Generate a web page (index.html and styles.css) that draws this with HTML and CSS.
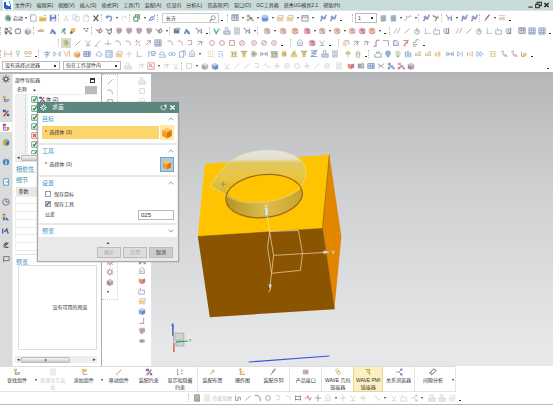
FILE: index.html
```html
<!DOCTYPE html>
<html lang="zh-CN">
<head>
<meta charset="utf-8">
<title>NX</title>
<link rel="stylesheet" href="styles.css">
</head>
<body>
<header>
  <nav class="menubar">
    <span class="logo" data-icon="app"></span>
    <a href="#">文件(F)</a><a href="#">编辑(E)</a><a href="#">视图(V)</a><a href="#">插入(S)</a><a href="#">格式(R)</a><a href="#">工具(T)</a><a href="#">装配(A)</a><a href="#">信息(I)</a><a href="#">分析(L)</a><a href="#">首选项(P)</a><a href="#">窗口(O)</a><a href="#">GC工具箱</a><a href="#">燕秀UG模具2.1</a><a href="#">帮助(H)</a>
    <span class="window-buttons"><button aria-label="最小化" data-icon="min"></button><button aria-label="还原" data-icon="restore"></button><button aria-label="关闭" data-icon="close"></button></span>
  </nav>
  <div class="bar tall" data-tools="g3 start"><span class="bar-label">启动</span></div>
  <div class="bar" data-tools="| parts asm cubeg | swoosh g2 figb figg figy g3 dots | bird bird2 pad pad pad pad bird v | blk figb g2 wire . | check stamp sheet wire v | g2 feat v g1 feat g2 feato g2 featr v feat v feat v feat featr feato v . g2 | lines line clock axis port dial g2 lines line clock axis port dial g3 tbl grid grid ."></div>
  <div class="bar low" data-tools="g58 | leaf g2 line snap line2 plus2 arc arc snapr arrowr grid g2 arc arc hook arrow2 g2 circ circ sq circs g2 circd circs circd . g6 | g2 dome g2 featr snap . g6 | folderp arrow2 arrow2 prof corner shape prof2 steps ."></div>
  <div class="bar low" data-tools="| dimh pin dimo . | g1 char mir miro boxy tblb g2 cloud list folder cross axis g3 scan cloudb chain clip dome v g4 dotg dotm g3 stack funnel globe dimb drum bell bottle funnel zig g1 stamp sheet g3 orb tower . | g2 hand bulb bulb2 bars mid mid midy g2 dimb next prevo playo g3 ladder g1 nums nums numy ."></div>
  <div class="bar tall last">
    <select aria-label="类型过滤器"><option>没有选择过滤器</option></select>
    <select id="scope" aria-label="选择范围"><option>仅在工作部件内</option></select>
    <div class="tools" data-tools="g2 stamp- g3 arrow2- redbox v arrow2- snap- | sq- v g1 cubeg cubeb g2 snap- line- line- hook- wave- plus- circd- circ- plus- line- circs- g2 sheet- g2 bookr bookb tblb wires netb netp boxp"></div>
    <span class="dot end"></span>
  </div>
</header>
<main>
  <aside class="rail" data-tools="gear treeo treer treep rainbow info page clk pal cad pen flag"></aside>
  <section class="navigator">
    <h2>部件导航器<i></i></h2>
    <div class="col-head">名称 <b>▲</b></div>
    <div class="tree">
      <ul>
        <li><span data-icon="chk"></span><span data-icon="treer"></span>体 (2)</li>
        <li><span data-icon="chk"></span></li>
        <li><span data-icon="chk"></span></li>
        <li><span data-icon="chk"></span></li>
        <li><span data-icon="chkr"></span></li>
        <li><span data-icon="chk"></span></li>
        <li><span data-icon="chk"></span></li>
      </ul>
    </div>
    <div class="scroll"><i>◂</i><b></b><i>▸</i></div>
    <h3>相依性</h3>
    <h3>细节</h3>
    <table><thead><tr><th>参数</th><th></th></tr></thead><tbody><tr><td></td><td></td></tr><tr><td></td><td></td></tr><tr><td></td><td></td></tr><tr><td></td><td></td></tr><tr><td></td><td></td></tr><tr><td></td><td></td></tr><tr><td></td><td></td></tr></tbody></table>
    <h3 class="preview-title">预览</h3>
    <div class="preview">没有可用的预览</div>
    <div class="scroll"><i>◂</i><b>⦀</b><i>▸</i></div>
  </section>
  <section class="docks">
    <div class="dock left" data-tools="line arc sq circ arc plus hook snap zig wave- circ plus arc line sheet circd snapr prof gearr gearr boxp v"></div>
    <div class="dock right" data-tools="stamp- sq- dome- cubeb feat boxp netb feat stamp cubeb feat boxp netb feat stamp cubeb feat featr netp dome bookr port folder cubeb hook2 pad eye"></div>
  </section>
  <section class="canvas">
    <svg viewBox="151 73 402 293" preserveAspectRatio="xMinYMin meet" aria-hidden="true">
      <defs>
        <linearGradient id="cone" x1="0" y1="0" x2="0" y2="1"><stop offset="0" stop-color="#e8e8e4"/><stop offset=".17" stop-color="#e4e2cf"/><stop offset=".24" stop-color="#dfc866"/><stop offset=".55" stop-color="#e6c543"/><stop offset="1" stop-color="#bfa33c"/></linearGradient>
        <linearGradient id="wall"><stop offset="0" stop-color="#b89520"/><stop offset=".5" stop-color="#dbbc4e"/><stop offset="1" stop-color="#c8a42a"/></linearGradient>
      </defs>
      <path fill="#ffc400" d="M205 163 330 154 323 228 198 236Z"/>
      <path fill="#e28600" d="M330 154 342 236 335 309 323 228Z"/>
      <path fill="#8b5400" d="M198 236 323 228 335 309 210 317Z"/>
      <path fill="none" stroke="#6f4903" stroke-width=".5" d="M198 236 323 228 335 309M323 228 330 154"/>
      <ellipse cx="264.500" cy="195.500" rx="38.500" ry="21.500" transform="rotate(-6 264.500 195.500)" fill="url(#wall)"/>
      <path fill="url(#cone)" opacity=".93" d="M211 184C216 177 226 159 246 153C264 147 287 149 298 157C309 164 308 179 300 187C290 199 262 205 240 201C227 197 219 188 212 187Z"/>
      <path fill="#ffc400" d="M226 191C232 179 260 171 283 175C296 177 303 183 302 187C292 198 266 204 243 201C235 199 229 196 226 191Z"/>
      <path fill="none" stroke="#eee3a4" stroke-width=".6" d="M211 184C216 177 226 159 246 153C264 147 287 149 298 157C309 164 308 179 300 187C290 199 262 205 240 201C227 197 219 188 212 187Z"/>
      <ellipse cx="264.500" cy="195.500" rx="38.500" ry="21.500" transform="rotate(-6 264.500 195.500)" fill="none" stroke="#9b6622" stroke-width="1.200"/>
      <path stroke="#777" stroke-width=".6" d="M221 183.500h5M223.500 181v5"/>
      <path fill="none" stroke="#f0ddb5" stroke-width=".7" d="M267 210 270 231 274 255 272 273 270 288M270 231 299 230 303 253 301 270 272 273M270 231 268 247 272 273M274 255 326 252"/>
      <path fill="#e6e6e6" stroke="#888" stroke-width=".3" d="M265.500 208h3v7h-3zM324 250l7 1.500-7 2zM269 284h3l-1 6z"/>
      <g fill="none" stroke="#eee" stroke-width=".7"><path d="m332 250 2 2 1-2M334 252v2M265 205h3l-3 3h3M269 292l2-3"/></g>
      <path fill="#d2d4d4" stroke="#888" stroke-width=".5" d="M175 333h9v7h-9zM176 341h8v5h-8z"/>
      <path stroke="#19a23a" stroke-width="1" d="m176 342 12-1"/><path stroke="#2345bd" stroke-width="1.300" d="M173 324v12"/><path stroke="#ef4431" stroke-width="1.300" d="M174 343v9"/><path stroke="#aaa" d="M173.500 334l.5 11"/>
      <path fill="none" stroke="#3a53dc" stroke-width="1.100" d="m249 362 81-6"/>
      <text x="189" y="342">Y</text><text x="171" y="326" class="z">Z</text>
    </svg>
  </section>
  <form class="dialog">
    <header><span data-icon="gearw"></span><strong>求差</strong><button type="button" aria-label="重置" data-icon="reset"></button><button type="button" aria-label="关闭" data-icon="xw"></button></header>
    <fieldset><legend>目标<span data-icon="up"></span></legend>
      <div class="pick active"><span><b>*</b> 选择体 (0)</span><button type="button" aria-label="选择目标" data-icon="body"></button></div></fieldset>
    <fieldset><legend>工具<span data-icon="up"></span></legend>
      <div class="pick cutter"><span><b>*</b> 选择体 (0)</span><button type="button" aria-label="选择工具" data-icon="body"></button></div></fieldset>
    <fieldset class="settings"><legend>设置<span data-icon="up"></span></legend>
      <label><input type="checkbox">保存目标</label>
      <label><input type="checkbox" checked>保存工具</label>
      <label class="tolerance">公差<input type="text" value="025"></label></fieldset>
    <fieldset><legend>预览<span data-icon="down"></span></legend></fieldset>
    <div class="fold">▲</div>
    <footer><button type="button" disabled>确定</button><button type="button" disabled>应用</button><button type="button">取消</button></footer>
  </form>
</main>
<footer class="assembly">
  <div class="ribbon">
    <button class="drop"><span data-icon="treeo"></span>查找组件</button>
    <button disabled><span data-icon="sheet"></span>处理显示装<br>载</button>
    <button class="drop"><span data-icon="add"></span>添加组件</button>
    <button><span data-icon="move"></span>移动组件</button>
    <button><span data-icon="treer"></span>装配约束</button>
    <button><span data-icon="hide"></span>显示和隐藏<br>约束</button>
    <button class="edge"><span data-icon="arrange"></span>装配布置</button>
    <button><span data-icon="explode"></span>爆炸图</button>
    <button><span data-icon="brush"></span>装配序列</button>
    <button class="edge"><span data-icon="product"></span>产品接口</button>
    <button class="edge"><span data-icon="link"></span>WAVE 几何<br>链接器</button>
    <button class="on"><span data-icon="linkp"></span>WAVE PMI<br>链接器</button>
    <button><span data-icon="relate"></span>关系浏览器</button>
    <button class="edge drop"><span data-icon="gap"></span>间隙分析</button>
  </div>
  <div class="bar sketch">
    <div class="tools" data-tools="g188 | g1 sketch sheet-"></div><span class="finish">完成草图</span>
    <div class="tools" data-tools="g1 ln line arcd circ hook- arc- rect cutr plus dome- v plus- snap- plus- g4 wave- v g2 snap- port- relate- v g3 stamp- stamp- folder- ."></div>
  </div>
</footer>
<script src="app.js"></script>
</body>
</html>
```
FILE: styles.css
```css
* { box-sizing: border-box; }
body {
  margin: 0; height: 100vh; display: flex; flex-direction: column; overflow: hidden;
  font: 5px/7px "Liberation Sans", "Noto Sans CJK SC", sans-serif; color: #333; background: #fff;
}
button, input, select { font: inherit; color: inherit; }
button { border: 0; padding: 0; background: none; }
a { color: inherit; text-decoration: none; white-space: nowrap; }
svg { display: block; width: 100%; height: 100%; }
[data-icon], .tool { display: block; width: 10px; height: 10px; flex: none; }
.tool { padding: 1px; opacity: .75; }
.off { opacity: .35; filter: grayscale(1); }

.menubar { display: flex; align-items: center; height: 11px; padding: 0 3px; gap: 5px; background: #c9dbd8; border-bottom: 1px solid #dce6e4; }
.logo { margin-right: -3px; }
.window-buttons { display: flex; margin-left: auto; gap: 1px; }
.window-buttons [data-icon] { width: 7px; height: 8px; }

.bar { display: flex; align-items: center; height: 12px; overflow: hidden; }
.bar.tall { height: 14px; }
.bar.low { height: 11px; }
.bar.last { height: 15px; padding: 0 3px 0 2px; border-bottom: 2px solid #b4b5b7; gap: 0; }
.tools { display: flex; align-items: center; }
.bar-label { width: 10px; white-space: nowrap; }
.gap { flex: none; }
.grip { flex: none; width: 3px; height: 8px; border-left: 1px dotted #bbb; }
.drop-arrow, .dot { flex: none; width: 5px; height: 10px; display: flex; align-items: center; justify-content: center; }
.drop-arrow::after { content: ""; border: 1px solid transparent; border-top: 2px solid #333; border-bottom: 0; }
.dot { align-items: flex-end; padding-bottom: 2px; }
.dot::after { content: ""; width: 2px; height: 1px; background: #333; }
.end { margin-left: auto; }
.bar select { width: 58px; height: 9px; margin-right: 3px; padding: 0 2px; border: 1px solid #bbb; border-radius: 0; appearance: none; background: linear-gradient(#333, #333) right 3px center / 2px 2px no-repeat #fff; }
.bar #scope { margin-right: 0; }
.bar .find { display: flex; align-items: center; width: 57px; height: 10px; border: 1px solid #ccc; }
.find input { border: 0; width: 100%; min-width: 0; padding: 0 3px; outline: 0; background: none; }
.find [data-icon] { width: 7px; height: 7px; margin-right: 2px; }
.bar .layer { width: 22px; margin: 0; height: 10px; }
[data-name="leaf"] { background: #cfcfb9; }

main { flex: 1; min-height: 0; display: flex; position: relative; overflow: hidden; }
.rail { display: flex; flex-direction: column; align-items: center; width: 12px; gap: 4px; background: #dadbdb; }
.rail .tool { opacity: 1; width: 12px; padding: 1px; }
.rail .tool:first-child { margin-bottom: 6px; }
.rail .tool:nth-child(4) { background: #fff; }
.rail .tool:nth-child(n+5):nth-child(-n+7) { margin-bottom: 6px; }
.rail .tool:nth-child(4) { margin-bottom: 1px; }
.rail .tool:nth-child(8) { margin-bottom: 1px; }
.navigator { width: 90px; display: flex; flex-direction: column; padding: 0 4px 3px 2px; border-left: 1px solid #eee; border-right: 1px solid #aaa; background: #fff; }
.navigator h2 { display: flex; justify-content: space-between; align-items: center; margin: 0; height: 12px; font-size: 5px; font-weight: 400; }
.navigator h2 i { width: 5px; height: 5px; border: 1px solid #333; border-top-width: 2px; margin-right: 2px; }
.col-head { height: 9px; padding-left: 2px; background: linear-gradient(90deg, #fff 85%, #bbb 85%); border-bottom: 1px solid #eee; }
.col-head b { font-size: 4px; margin-left: 4px; }
.tree { height: 59px; overflow: hidden; background: linear-gradient(90deg, #f1f1f1 13px, #fff 13px); }
.tree ul { list-style: none; margin: 0 0 0 10px; padding: 0; border-left: 1px dotted #ccc; }
.tree li { display: flex; align-items: center; height: 9px; padding-left: 5px; }
.tree [data-icon] { width: 7px; height: 7px; }
.tree [data-icon="treer"] { width: 8px; }
.scroll { display: flex; align-items: center; height: 7px; background: #eee; font-size: 5px; }
.scroll i { font-style: normal; width: 6px; text-align: center; flex: none; }
.scroll b { width: 49px; height: 6px; margin-right: auto; border: 1px solid #bbb; border-radius: 1px; background: linear-gradient(#f4f4f4, #ccc); font-size: 3px; line-height: 4px; text-align: center; }
.navigator h3 { margin: 0; height: 11px; padding: 3px 1px 0; font: 6px/8px "Liberation Sans", "Noto Sans CJK SC", sans-serif; color: #3f93b8; border-top: 1px solid #e2e2e2; }
.navigator table { border-collapse: collapse; width: 100%; margin-top: 4px; height: 64px; }
.navigator th { background: #e8e8e8; font-weight: 400; text-align: left; padding: 0 3px; height: 9px; }
.navigator td { border: 1px solid #eee; padding: 0; }
.navigator .preview-title { margin-top: 3px; }
.preview { flex: 1; display: flex; align-items: center; justify-content: center; margin: 0 0 6px 3px; border: 1px solid #ddd; padding-left: 25px; white-space: nowrap; }
.docks { width: 49px; display: flex; justify-content: space-between; background: #fff; overflow: hidden; }
.dock { display: flex; flex-direction: column; width: 16px; padding: 2px 3px; overflow: hidden; }
.dock.left { align-self: flex-start; border: 1px dotted #ccc; border-left: 0; }
.dock.right { align-self: flex-start; width: 14px; padding: 2px 0; }
.canvas { flex: 1; background: linear-gradient(#b6b7b8, #cfd0d1 40%, #e6e7e9 92%); overflow: hidden; }
.canvas text { font-size: 4px; fill: #444; }
.canvas .z { fill: #2345bd; }

.dialog { position: absolute; left: 37px; top: 28px; width: 142px; padding: 0 1px 3px; background: #e9e9e9; border: 1px solid #aaa; box-shadow: 0 0 1px #888; }
.dialog header { display: flex; align-items: center; height: 11px; margin: -1px -2px 0; padding: 0 3px; gap: 2px; background: #5b877e; color: #e3eeeb; }
.dialog header strong { font-size: 6px; font-weight: 400; margin: 0 auto 0 3px; }
.dialog header [data-icon] { width: 7px; height: 7px; }
.dialog fieldset { margin: 0 0 2px; padding: 0 3px 3px; border: 0; background: #fff; }
.dialog legend { float: left; display: flex; align-items: center; width: 100%; height: 12px; padding: 0; font-size: 6px; color: #3f93b8; }
.dialog legend [data-icon] { width: 6px; height: 6px; margin-left: auto; }
.pick { clear: both; display: flex; align-items: center; height: 15px; }
.pick > span { flex: 1; padding: 3px; height: 13px; }
.pick b { color: #c33; margin-right: 1px; }
.pick.active > span { background: #fcd66d; }
.pick button { width: 14px; height: 15px; padding: 1px; margin-left: 1px; }
.pick.active button { background: #ffe8a8; }
.pick.cutter button { background: #a9cbe5; border: 1px solid #74a5c9; }
.settings label { clear: both; display: flex; align-items: center; height: 10px; padding-left: 3px; gap: 3px; }
.settings input[type="checkbox"] { appearance: none; width: 6px; height: 6px; margin: 0; border: 1px solid #999; background: #fff; }
.settings input:checked { background: linear-gradient(135deg, #dfe6f6 20%, #365caa 45%, #dfe6f6 70%); }
.settings .tolerance { justify-content: space-between; height: 11px; }
.settings .tolerance input { width: 36px; height: 10px; padding: 0 2px; border: 1px solid #bbb; font-size: 6px; border-radius: 0; }
.dialog fieldset:last-of-type { padding-bottom: 0; }
.fold { height: 7px; text-align: center; font-size: 4px; }
.dialog footer { display: flex; justify-content: flex-end; gap: 2px; padding: 1px 4px 0; }
.dialog footer button { width: 24px; height: 11px; background: #ccc; border: 1px solid #bbb; }
.dialog footer button:disabled { background: #ddd; color: #aaa; }

.assembly { border-bottom: 1px solid #bbb; background: #fff; }
.ribbon { display: grid; grid-template-columns: 38fr 30fr 36fr 30fr 30fr 33fr 31fr 30fr 32fr 32fr 32fr 30fr 31fr 41fr; height: 26px; border-top: 1px solid #ddd; width: 456px; max-width: 100%; border-bottom: 1px solid #e4e4e4; border-right: 1px solid #e4e4e4; }
.ribbon button { position: relative; display: flex; flex-direction: column; align-items: center; line-height: 7px; min-width: 0; text-align: center; white-space: nowrap; }
.ribbon [data-icon] { opacity: .8; padding: 1px; }
.ribbon button:disabled { color: #ccc; }
.ribbon button:disabled [data-icon] { opacity: .3; }
.ribbon .edge { border-left: 1px solid #e4e4e4; }
.ribbon .on { background: #fbf0c3; border: 1px solid #ecd58c; border-top: 0; }
.ribbon .drop { padding-right: 4px; }
.ribbon .drop::after { content: ""; position: absolute; right: 1px; top: 12px; border: 1px solid transparent; border-top: 2px solid #333; }
.sketch { height: 12px; }
.finish { width: 20px; color: #bbb; white-space: nowrap; }
```
FILE: app.js
```js
const s = (color, d, w = 1) => `<path fill="none" stroke="${color}" stroke-width="${w}" d="${d}"/>`;
const f = (color, d) => `<path fill="${color}" d="${d}"/>`;
const c = (color, x, y, r) => `<circle cx="${x}" cy="${y}" r="${r}" fill="${color}"/>`;
const o = (color, x, y, r, w = 1) => `<circle cx="${x}" cy="${y}" r="${r}" fill="none" stroke="${color}" stroke-width="${w}"/>`;
const cube = (a, b, d) => f(a, "M1 3 5 1l4 2-4 2z") + f(b, "M1 3l4 2v5L1 8z") + f(d, "M9 3 5 5v5l4-2z");
const blocks = (a, b, d) => f(a, "M1 1h4v3H1z") + f(b, "M4 4h4v3H4z") + f(d, "M1 6h3v3H1zM7 7h3v2H7z");
const gear = (col) => o(col, 5, 5, 2.5, 1.4) + s(col, "M5 0v2M5 8v2M0 5h2M8 5h2M1.500 1.500l1 1M7.500 7.500l1 1M1.500 8.500l1-1M7.500 2.500l1-1");
const check = (col, d) => f("#fff", "M1 1h8v8H1z") + s(col, "M1 1h8v8H1z") + s(col, d, 1.8);
const feature = (a, b) => c(a, 5, 5, 4) + f(b, "M4 3h5v5H4z") + s("#fff", "M2 5l3 2 4-3", .7);
const bulb = (a) => c(a, 5, 4, 3.5) + f("#789", "M3.500 7h3v2h-3z");

const icons = {
  app: f("#fff", "M0 0h10v10H0z") + s("#2455c4", "M2 2v5c0 2 5 2 5-1M2 5l6 4", 2) + s("#25a5d8", "M6 1l2 5"),
  min: s("#222", "M2 8h6", 1.500),
  restore: s("#222", "M3 4V1h6v5H6M1 4h5v5H1z", 1.500),
  close: s("#222", "M2 2l6 6M8 2 2 8", 2),
  start: c("#b9c5bc", 5, 5, 4.500) + f("#3f8b55", "M2 4l3-3 3 3v4H3z") + s("#34485b", "M3 5h4v4"),
  new: f("#fff", "M2 1h5l2 2v6H2z") + s("#6287b8", "M2 1h5l2 2v6H2z") + s("#f2bd42", "M1 1l3 3"),
  open: f("#f2c14c", "M0 3h4l1 1h4v5H0z") + f("#d89e28", "M2 5h8L8 9H0z") + s("#5aa05a", "M6 2h3"),
  save: f("#3d4faf", "M1 1h8v8H1z") + f("#dfe7fa", "M3 1h4v3H3zM3 6h5v3H3z"),
  cut: s("#888", "M2 1l5 6M8 1 3 7") + o("#888", 3, 8, 1) + o("#888", 7, 8, 1),
  copy: s("#777", "M1 1h5v6H1zM4 3h5v6H4z"),
  paste: s("#888", "M2 2h6v7H2zM4 1h3v2H4z"),
  del: s("#333", "M2 2l6 7M8 1 2 9", 1.700),
  undo: s("#3e75c4", "M3 4c5-4 7 2 3 5", 1.700) + f("#3e75c4", "M0 4l4-3v5z"),
  redo: s("#999", "M7 4C2 1 1 6 4 8", 1.200) + f("#999", "M9 4 6 2v4z"),
  cmd: s("#3c7d4d", "M1 8V4h5v5H1M3 4V1h5v6", 1.500) + c("#58a15a", 7, 3, 2),
  pick: s("#4c75b8", "M1 9l3-5h3l2-3M3 8l5-2", 1.400) + c("#7d93c8", 5, 4, 1.500),
  search: o("#777", 6, 4, 3) + s("#777", "M4 6 1 9", 1.500),
  tbl: f("#e5eaf4", "M1 1h8v8H1z") + s("#59698b", "M1 1h8v7H1zM1 4h8M4 1v7M7 1v7") + f("#777", "M1 1h8v1H1z"),
  tblb: f("#dfe7fa", "M1 2h8v6H1z") + s("#435fb0", "M1 2h8v6H1zM1 5h8M4 2v6M7 2v6"),
  grid: f("#d9e1f2", "M1 1h8v8H1z") + s("#6478a5", "M1 1h8v8H1zM1 4h8M1 7h8M4 1v8M7 1v8", .900),
  figs: blocks("#888", "#555", "#999"),
  cylinder: f("#426fce", "M1 3h8v5c-2 2-6 2-8 0z") + `<ellipse cx="5" cy="3" rx="4" ry="2" fill="#8fb5ee"/>`,
  folder: f("#e9c17b", "M1 3h3l1 1h4v5H1z") + s("#7a8aa5", "M3 2h6v3", .800),
  folderp: f("#e8cf98", "M1 3h5v6H1z") + s("#8b80a0", "M3 2h5l1 5"),
  box: f("#eee", "M1 2h8v7H1z") + s("#666", "M1 2h8v7H1zM1 4h8"),
  wand: s("#5d62a8", "M2 9l2-4 3 1 2-5", 1.800) + c("#7181c7", 4, 4, 2),
  layers: f("#9da9b4", "M2 2l5-1 2 1v7l-6 1-1-2z") + s("#64788b", "M2 4h6M3 6h5M3 8h5"),
  swirl: s("#a77555", "M1 9l3-5 4-1M4 4 2 2M7 1l2 2"),
  key: c("#d5b54c", 7, 4, 2) + s("#555", "M1 2l5 3-2 4", 1.400),
  knife: s("#a23c49", "M8 1 3 7", 1.800) + s("#555", "M4 7 2 9"),
  ruler: f("#e5cf9a", "M1 4h8v4H1z") + s("#aaa", "M1 2h8M3 4v2M5 4v2M7 4v2"),
  parts: blocks("#666", "#777", "#444") + s("#555", "M6 1h3v3M1 6V5h3"),
  asm: o("#7885a8", 5, 5, 3.500) + s("#5b6a95", "M2 3h6v5H2z"),
  cubeg: cube("#c9cdd1", "#7d8690", "#a0a7ae"), cubeb: cube("#9dc0f1", "#5784cb", "#3b62b0"),
  swoosh: s("#d5a260", "M1 6c3-4 5-3 8-1", 2) + s("#996538", "M2 5l6 1"),
  figb: f("#3c63bd", "M1 8l3-6 4 4 1 3H6L4 6 3 9z"), figg: f("#58a16c", "M2 9 5 1l2 4 2 4H7L5 6z") + c("#365cb0", 7, 3, 1.500),
  figy: f("#e3a83c", "M2 2l6-1v5l-3 1-3 3z") + c("#444", 3, 7, 1.700),
  dots: s("#333", "M2 2h2M6 2h2M4 5h3", 1.500),
  bird: s("#777", "M1 3l3 2 3-3 2 3-2 2H4", 1.400) + c("#bd6d63", 5, 5, 1.700),
  bird2: s("#666", "M1 2l3 3 4-3v4L6 9 3 7", 1.500), pad: f("#bb8e99", "M2 1h6l1 5-4 3-3-2z") + s("#6f718e", "M1 3l4 2 4-2M4 5v3"),
  blk: f("#45536e", "M1 2h7v6H1z") + f("#7894ca", "M3 1h6v3H3z"),
  wire: s("#668bad", "M1 1l3 3v4M3 4l5 1M8 2v6", 1.500) + c("#667", 8, 7, 1.200),
  check: s("#3b9c76", "M1 2l3 6 3-5", 1.800) + s("#698", "M7 1l2 3"),
  stamp: f("#bdc6d3", "M1 5h8v4H1z") + s("#7485a0", "M3 4V1h3v4M1 5h8v4H1z"),
  sheet: f("#dde5eb", "M2 1h6v8H2z") + s("#8290a2", "M2 1h6v8H2zM3 3h4M3 5h4M3 7h4", .800),
  feat: feature("#e0a06d", "#a285ac"), feato: feature("#eb8353", "#b68b7b"), featr: feature("#dd7e8b", "#a74c63"),
  lines: s("#888", "M1 8 5 2M5 8l4-7"), line: s("#8c6e65", "M2 8 8 2"), line2: s("#889", "M2 8 8 2M1 9h4"),
  clock: o("#687", 5, 6, 3) + s("#687", "M5 6V1M5 6h2"), axis: s("#8fa0bc", "M3 1v7h6") + c("#9aa", 3, 8, 1),
  port: s("#73839b", "M1 3v6h7V4H4M3 1v4"), dial: o("#677b91", 4, 5, 3) + s("#667", "M7 1v7H3M4 3v4", 1.300),
  leaf: f("#8c9c3c", "M2 3l3-2 3 3v3L5 9 3 7z") + s("#d4a94c", "M2 2l4 6", 1.400),
  snap: s("#777", "M2 2l3 4 3-4M5 6v3M2 8h6", .900), snapr: s("#b36b6b", "M2 8l6-6M2 3h3M3 1v3M7 6v3"),
  plus2: s("#988", "M1 6h8M5 2v6"), plus: s("#666", "M5 1v8M1 5h8"), cross: s("#e0b48e", "M5 1v8M1 5h8"),
  arc: s("#8a6a70", "M2 3c5-2 6 2 6 5"), arcd: s("#444", "M1 2c6-1 7 3 7 7"), arrowr: s("#a86a61", "M2 8 8 2M4 2h4v4"),
  hook: s("#9b7076", "M2 2h5v5H3"), hook2: s("#9d8b98", "M7 1v7H2", 1.400), arrow2: s("#777", "M2 3h5v5M2 8l5-5M7 5l2-2"),
  circ: o("#a76072", 5, 5, 3), sq: s("#a76072", "M2 2h6v6H2z"), rect: s("#555", "M1 3h8M1 7h8M2 2v6M8 2v6"),
  circs: o("#a76072", 5, 5, 3) + s("#a76072", "M3 7l4-4"), circd: o("#a76072", 5, 5, 3) + c("#a76072", 5, 5, 1),
  dome: s("#7180a5", "M2 7V4c1-4 5-4 6 0v4H1") + f("#b9c4de", "M3 4h4v3H3z"),
  prof: s("#8c5960", "M2 9h3V4c0-3 4-3 4-2", 1.300), prof2: s("#bd684a", "M2 2h5v3H4v4M2 9l6-8", 1.300), corner: s("#777", "M1 2h7v7"),
  shape: f("#dfe6f3", "M2 2h3l3 5v1H2z") + s("#53689b", "M2 2h3c3 0 3 3 3 6H2z"), steps: s("#777", "M9 1H5v3H2v3h5M1 9h4"),
  dimh: s("#c28052", "M1 1v8M9 1v8M1 5h8"), dimb: s("#5b82a7", "M1 2v6M9 2v6M1 5h8M3 3v4M7 3v4"), dimo: s("#c19155", "M1 2h3v3H1zM6 2h3v3H6zM1 8h8"),
  pin: o("#67a184", 5, 3, 2) + s("#67a184", "M5 5v4"), char: s("#4f7bb5", "M1 3h8M5 1v2M3 5h4L5 6v3H3M2 6h6"),
  mir: s("#668bc0", "M1 2v6l3-3zM9 2v6L6 5z"), miro: s("#d9894f", "M1 1l3 7 3-7M8 1v8"), boxy: cube("#edca7d", "#e1a44c", "#c4803c"),
  cloud: s("#6789bb", "M2 7C0 4 3 4 3 4c1-4 5-2 4 1 3-1 2 3 0 3z"), cloudb: s("#5c96c8", "M2 6c-1-4 6-5 6-1M2 6h7v3H1"),
  list: f("#e1eaf5", "M1 1h8v8H1z") + s("#587fae", "M1 1h8v8H1zM3 3h1M5 3h3M3 6h1M5 6h3"), scan: s("#547bad", "M1 1v8M4 2h5v3H4zM4 7h5"),
  chain: o("#4f9bca", 3, 5, 2) + o("#4f9bca", 7, 5, 2), clip: s("#5b8db9", "M2 2h5v7H2zM5 1h4v6"),
  dotg: s("#ddb263", "M1 2h8M1 5h8M1 8h8", 1.200).replace("<path", '<path stroke-dasharray="1.5 1"'), dotm: s("#4b83c3", "M2 2h6M2 5h6M2 8h3M7 6v4").replace("<path", '<path stroke-dasharray="2 1"'),
  stack: f("#dfb343", "M1 2h8v2H1zM1 7h8v2H1z") + s("#4e73a4", "M2 5h6M3 4v3M7 4v3"), funnel: f("#e4b540", "M1 1h8L7 5v4H3V5z") + s("#6988ac", "M1 2h8M3 5h4"),
  globe: c("#e4bd53", 5, 5, 3.500) + s("#4f83ba", "M1 5h8M5 1v8M2 2c4 2 4 4 0 6"), drum: f("#e2bf59", "M1 2h8v7H1z") + s("#5280bb", "M1 2h8v7H1M1 4h8M3 4v4M7 4v4"),
  bell: f("#deac3d", "M2 8V4c1-4 5-4 6 0v4z") + s("#69839f", "M3 5h4v3"), bottle: f("#e5bd51", "M3 1h4v3l2 2v3H1V6l2-2z") + s("#789", "M3 4h4"),
  zig: s("#4a79bd", "M1 1h8L2 4h6L1 8h8", 1.200), orb: c("#dfc36d", 5, 4, 3) + s("#789a82", "M2 4h6M5 7v2"), tower: s("#9f916c", "M5 1l3 3H2zM3 4v5h4V4M3 6h4"),
  hand: s("#6f9188", "M1 5v4h8V4M3 5V2M5 5V1M7 5V2", 1.200), bulb: bulb("#5d9fc9"), bulb2: bulb("#c9d3a2"), bars: f("#7c9bc8", "M1 2h2v7H1zM4 1h2v8H4zM7 3h2v6H7z"),
  mid: s("#baa577", "M1 7h8M2 7V4h2v3M6 7V2h2v5"), midy: f("#e5bd61", "M1 3h3v5H1zM5 2h3v6H5z"), next: s("#6c9ac1", "M2 2v6l4-3zM8 2v6"), prevo: s("#d29a4d", "M8 2v6L4 5zM2 2v6M1 5h2"), playo: s("#659dc4", "M1 2l4 3-4 3zM5 2l4 3-4 3z"),
  ladder: s("#d3b46b", "M1 2h8M1 5h8M1 8h8M3 2v6M7 2v6"), nums: s("#7188ac", "M1 3l3-2v6M4 5l5 3") + c("#d0a05a", 7, 7, 1.700), numy: s("#678", "M2 2v6h3") + c("#dfb64c", 6, 6, 2.500),
  redbox: s("#cf665d", "M1 1h8v8H1z") + s("#cf665d", "M3 3l4 4M3 6l3-3", 1.300), wave: s("#777", "M1 5c2-5 3-3 4 0s3 4 4 0"),
  bookr: f("#d76b45", "M1 2l4 1v6L1 7z") + f("#b15656", "M9 2 5 3v6l4-2z"), bookb: f("#6b83c9", "M1 2h8v6H1z") + f("#e4a35c", "M5 1h3v6H5z"),
  wires: s("#777", "M1 2l4 3 4-3M1 8l4-3 4 3") + c("#8b9d48", 3, 4, 1), netb: blocks("#6c8ccc", "#8f92cc", "#6877ae") + s("#667", "M2 3l6 5"), netp: blocks("#c4859a", "#8370b2", "#b45b70"), boxp: cube("#c9a8b4", "#8e6685", "#a88297"),
  gear: gear("#555"), gearw: gear("#fff"), gearr: gear("#ab7672"),
  treeo: f("#ddb34c", "M1 1h4v3H1z") + s("#666", "M3 4v4h4M3 6h3") + f("#87a7cb", "M6 5h3v3H6z"), treer: f("#3f62a6", "M1 1h4v3H1zM6 6h3v3H6z") + s("#c94242", "M2 9l6-7", 1.800),
  treep: f("#a5569a", "M1 1h4v3H1z") + s("#7b467e", "M2 4v5h5M2 6h5") + f("#d58563", "M6 5h3v4H6z"),
  rainbow: cube("#76c65b", "#e6a13b", "#356fc6"), info: c("#3f83c8", 5, 5, 4) + s("#fff", "M5 4v4M5 2v1", 1.400), page: f("#fff", "M2 1h6v8H2z") + s("#4889b8", "M2 1h6v8H2zM4 6l2-2 2 3"),
  clk: o("#5f6687", 5, 5, 4) + s("#5f6687", "M5 2v3h3"), pal: f("#df4444", "M1 1h3v2H1z") + f("#efc536", "M1 3h3v2H1z") + f("#36a454", "M1 5h3v2H1z") + f("#3468c9", "M1 7h3v2H1zM5 5l4 4H5z"),
  cad: s("#435a9a", "M1 2v6M3 6l4-4M5 2l3 6", 1.600), pen: s("#555", "M2 8l6-6M2 5l4-3M4 8h4", 1.500), flag: s("#666", "M2 9V2h7v5H2"),
  chk: check("#318a47", "M3 5l1.500 2L8 2"), chkr: check("#cb4b4b", "M3 3l4 4M7 3 3 7"),
  reset: s("#fff", "M3 2c-3 3-1 6 2 6s5-3 3-5", 1.300) + f("#fff", "M6 1h4L7 5z"), xw: s("#fff", "M2 2l6 6M8 2 2 8", 2), up: s("#3c86a8", "M1 7l4-4 4 4", 1.300), down: s("#3c86a8", "M1 3l4 4 4-4", 1.300),
  body: cube("#ffc25a", "#f39b22", "#df7413"), add: f("#e8b645", "M2 1h4v4H2z") + s("#777", "M4 5v3h5") + s("#d79a33", "M7 1v4M5 3h4"), move: s("#d8aa55", "M2 8l6-6", 1.500) + s("#888", "M1 7l2 2"),
  hide: s("#777", "M2 1v7h2M6 1l2 2-2 2M6 7h3") + c("#b9a269", 2, 8, 1), arrange: f("#dfc26b", "M4 1l4 3-4 3z") + s("#a2965f", "M1 8l5-4"), explode: s("#d29a42", "M3 1v7h6M3 5h4", 1.400) + c("#d29a42", 3, 2, 1.500),
  brush: s("#8b6c80", "M8 1 4 6", 2) + s("#666", "M4 6 2 9"), product: f("#a9a2b2", "M1 2h7v6H1z") + c("#d1834b", 6, 5, 2), link: o("#d6a94e", 4, 3, 2) + o("#b38b6a", 6, 6, 2), linkp: s("#c58b35", "M2 2h5v3M4 4l3 3v2", 1.400),
  relate: s("#6f6f98", "M1 5h4l3-3M5 5l3 3") + c("#5b67b1", 8, 2, 1.500) + c("#5b67b1", 8, 8, 1.500), gap: s("#777", "M1 6l5-5 3 2-5 5zM3 6v3", 1.300),
  sketch: f("#a3aa90", "M2 1h6v8H2z") + s("#58664c", "M2 1h6v8H2zM4 5l4 4"), ln: s("#8b4956", "M2 2v6h3V4h3v4"), cutr: s("#b95766", "M1 5h3l1-3 2 6 2-4", 1.200), eye: `<ellipse cx="5" cy="5" rx="4" ry="2.500" fill="#b8a1b4"/>` + c("#755e82", 5, 5, 1.500)
};

const draw = (name) => `<svg viewBox="0 0 10 10" aria-hidden="true">${icons[name] || ""}</svg>`;

function tool(token) {
  if (token === "|") return `<span class="grip"></span>`;
  if (token === "v") return `<span class="drop-arrow"></span>`;
  if (token === ".") return `<span class="dot"></span>`;
  if (/^g\d+$/.test(token)) return `<span class="gap" style="width:${token.slice(1)}px"></span>`;
  const off = token.endsWith("-");
  const name = off ? token.slice(0, -1) : token;
  return `<button class="tool${off ? " off" : ""}" data-name="${name}" aria-label="${name}">${draw(name)}</button>`;
}
const tools = (list) => list.split(" ").map(tool).join("");

document.querySelectorAll("[data-tools]").forEach((el) => {
  el.insertAdjacentHTML("afterbegin", tools(el.dataset.tools));
});

const standard = document.querySelector(".bar.tall");
standard.insertAdjacentHTML("beforeend",
  tools("v new open save | cut- copy- paste- del | undo v redo- | cmd v pick | g2") +
  `<label class="find"><input type="text" value="长方" aria-label="查找命令"><span data-icon="search"></span></label>` +
  tools(". g3 | tbl v figs v cylinder v folder folder v box v g3 wand wand . g9 |") +
  `<select class="layer" aria-label="工作图层"><option>1</option></select>` +
  tools("g1 layers layers v swirl v | wand key | wire v wand wand | knife v ruler ."));

document.querySelectorAll("[data-icon]").forEach((el) => { el.innerHTML = draw(el.dataset.icon); });
```
